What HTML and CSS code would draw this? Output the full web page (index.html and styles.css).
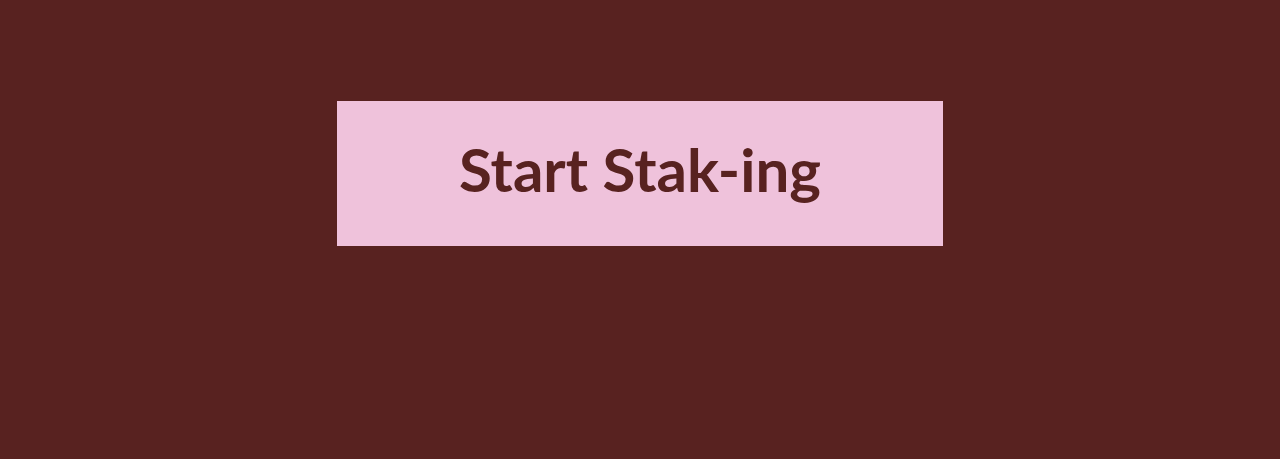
FILE: index.html
```html
<!DOCTYPE html>
<html lang="en">
<head>
    <meta charset="UTF-8">
    <meta name="viewport" content="width=device-width, initial-scale=1.0">
    <title>Start Stak-ing</title>
    <link rel="stylesheet" href="styles.css">
</head>
<body>
    <main class="cta">
        <button type="button" class="cta-btn">Start Stak-ing</button>
    </main>
</body>
</html>
```
FILE: styles.css
```css
body {
    margin: 0;
    background-color: #582220;
}

.cta {
    display: flex;
    justify-content: center;
    padding: 101px 20px;
}

.cta-btn {
    padding: 32px 122px 40px;
    border: none;
    background-color: #efc2db;
    color: #582220;
    font-family: Lato, sans-serif;
    font-size: 60px;
    font-weight: 700;
    line-height: 73px;
    cursor: pointer;
}
```
